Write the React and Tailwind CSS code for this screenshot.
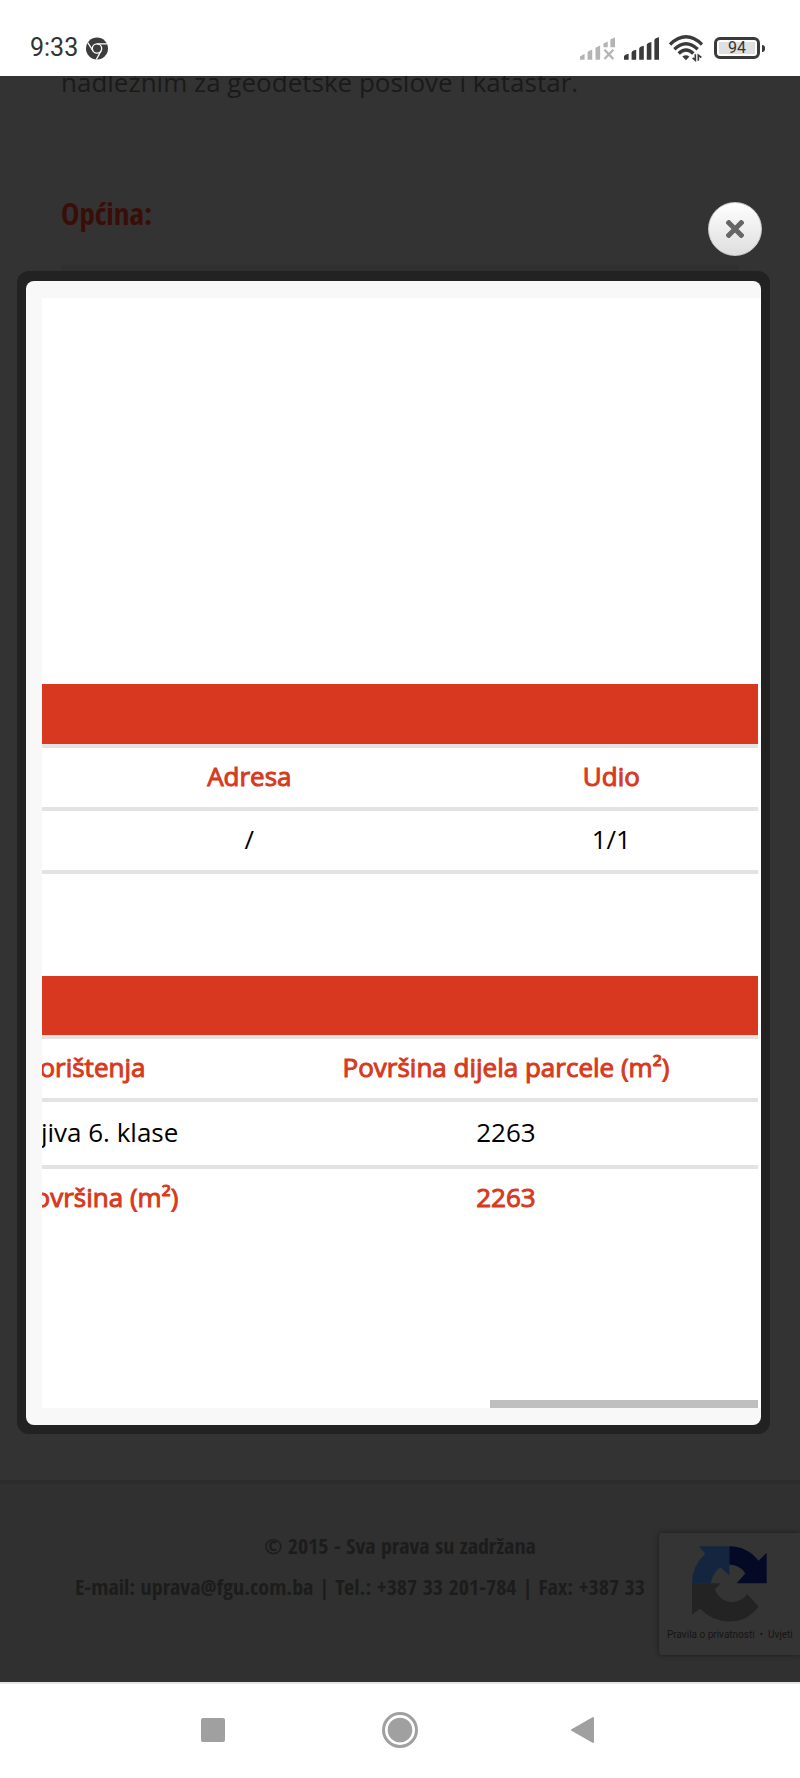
import React from 'react';

const th = 'h-[63px] pb-1 border-b-4 border-[#e3e3e3] text-center font-normal [-webkit-text-stroke:1px_#d63a20]';
const td = 'pb-1 border-b-4 border-[#e3e3e3] text-center text-black';
const total = 'h-[59px] pb-1 text-center font-normal [-webkit-text-stroke:1px_#d63a20]';

function ChromeIcon() {
  return (
    <svg viewBox="0 0 66 68" className="w-[22px] h-[23px]" fill="none" stroke="#fff" strokeWidth="4">
      <circle cx="33" cy="34" r="33" fill="#3c3c3c" stroke="none" />
      <circle cx="33" cy="34" r="14" />
      <path d="M33 20H64M21 41L5 16M45 41L31 67" />
    </svg>
  );
}

function NoSignalIcon() {
  return (
    <svg viewBox="0 0 106 68" className="w-[35px] h-[23px]" fill="#b4b4b4">
      <path d="M0 58L14 50V68H0ZM23 44L37 37V68H23ZM47 32L61 25V68H47ZM71 19L84 13V30H71ZM92 7L106 0V30H92Z" />
      <path d="M74 38L101 66M101 38L74 66" stroke="#b4b4b4" strokeWidth="7" />
    </svg>
  );
}

function SignalIcon() {
  return (
    <svg viewBox="0 0 106 68" className="w-[35px] h-[23px]" fill="#3a3a3a">
      <path d="M0 58Q2 52 14 50V68H0ZM23 46Q25 40 37 38V68H23ZM46 34Q48 28 60 26V68H46ZM69 22Q71 16 83 14V68H69ZM92 8Q94 2 106 0V68H92Z" />
    </svg>
  );
}

function WifiIcon() {
  return (
    <svg viewBox="0 0 102 80" className="w-[34px] h-[27px]" fill="none" stroke="#3a3a3a" strokeWidth="10">
      <path d="M3 28Q51 -18 99 28M16 42Q51 9 86 42M29 55Q51 34 73 55" />
      <path d="M40 64Q51 56 61 64L51 75Z" fill="#3a3a3a" stroke="none" />
      <path d="M79 57V75L71 68M88 77V60L97 67" strokeWidth="5" />
    </svg>
  );
}

function RecaptchaLogo() {
  return (
    <svg viewBox="216 140 225 227" className="w-[75px] h-[76px]">
      <path d="M216 251Q217 198 256 163L237 140H328V228L301 203Q276 222 273 251Z" fill="#14253f" />
      <path d="M328 140Q382 140 416 184L440 160V251H350L376 222Q360 196 328 195Z" fill="#040a26" />
      <path d="M216 251H302L284 270Q302 308 335 308Q364 306 382 284L416 321Q382 366 328 366Q276 365 240 328L216 346Z" fill="#232323" />
    </svg>
  );
}

function StatusBar() {
  return (
    <header className="h-[76px] bg-white flex items-center justify-between pl-[30px] pr-[35px] pt-5 font-[Roboto,sans-serif] text-[#333]">
      <div className="flex items-center gap-2">
        <span className="text-[25px] leading-7">9:33</span>
        <ChromeIcon />
      </div>
      <div className="flex items-center">
        <NoSignalIcon />
        <span className="w-[9px]" />
        <SignalIcon />
        <span className="w-[10px]" />
        <WifiIcon />
        <span className="w-[11px]" />
        <div className="w-[46px] h-[22px] border-[3px] border-[#3a3a3a] rounded-md p-[2px]">
          <div className="h-full bg-[#e0e0e0] flex items-center justify-center text-base leading-3">94</div>
        </div>
        <span className="w-[3px] h-[7px] ml-[2px] rounded-r-sm bg-[#3a3a3a]" />
      </div>
    </header>
  );
}

function OwnersTable() {
  return (
    <table className="w-[128%] shrink-0 table-fixed border-separate border-spacing-0">
      <colgroup>
        <col className="w-[21%]" />
        <col className="w-[47%]" />
        <col className="w-[32%]" />
      </colgroup>
      <thead>
        <tr><td colSpan={3} className="h-16 bg-[#d93820] border-b-4 border-[#e3e3e3]" /></tr>
        <tr className="text-[#d63a20]">
          <th className={th} />
          <th className={th}>Adresa</th>
          <th className={th}>Udio</th>
        </tr>
      </thead>
      <tbody>
        <tr className="h-[63px]">
          <td className={td} />
          <td className={td}>/</td>
          <td className={td}>1/1</td>
        </tr>
      </tbody>
    </table>
  );
}

function ParcelTable() {
  return (
    <table className="w-[128%] shrink-0 table-fixed border-separate border-spacing-0 whitespace-nowrap">
      <colgroup>
        <col className="w-[45%]" />
        <col className="w-[55%]" />
      </colgroup>
      <thead>
        <tr><td colSpan={2} className="h-[63px] bg-[#d93820] border-b-4 border-[#e3e3e3]" /></tr>
        <tr className="text-[#d63a20]">
          <th className={th}>Način korištenja</th>
          <th className={th}>Površina dijela parcele (m²)</th>
        </tr>
      </thead>
      <tbody>
        <tr className="h-[67px]">
          <td className={td}>Oranica/Njiva 6. klase</td>
          <td className={td}>2263</td>
        </tr>
        <tr className="text-[#d63a20]">
          <th className={total}>Ukupna površina (m²)</th>
          <th className={total}>2263</th>
        </tr>
      </tbody>
    </table>
  );
}

export default function App() {
  return (
    <div className="min-h-screen bg-white flex flex-col font-['Open_Sans',sans-serif]">
      <StatusBar />

      <main className="relative flex-1 flex flex-col overflow-hidden bg-[#333]">
        {/* Dimmed page */}
        <div className="flex-1 px-[61px]">
          <p className="-mt-3.5 text-[26px] leading-10 text-[#1a1a1a]">nadležnim za geodetske poslove i katastar.</p>
          <h2 className="mt-[91px] text-[31px] leading-10 font-bold text-[#3a0e08] font-['Open_Sans_Condensed','Liberation_Sans_Narrow',sans-serif]">Općina:</h2>
          <div className="mt-8 h-16 bg-[#303030]" />
        </div>
        <footer className="h-[202px] pt-[41px] border-t-4 border-[#2c2c2c] bg-[#303030] text-[22px] leading-[41px] font-bold text-[#1c1c1c] whitespace-nowrap font-['Open_Sans_Condensed','Liberation_Sans_Narrow',sans-serif]">
          <p className="text-center">© 2015 - Sva prava su zadržana</p>
          <p className="pl-[75px]">E-mail: uprava@fgu.com.ba | Tel.: +387 33 201-784 | Fax: +387 33</p>
        </footer>
        <aside className="absolute right-0 bottom-[27px] w-[141px] h-[122px] pt-[13px] rounded-l bg-[#343434] shadow-[0_0_5px_#1c1c1c] font-[Roboto,sans-serif]">
          <div className="flex justify-center"><RecaptchaLogo /></div>
          <p className="mt-[5px] pl-2 flex gap-[5px] text-[10px] leading-4 text-[#141414] whitespace-nowrap">
            <a href="#privatnost">Pravila o privatnosti</a>
            <span>•</span>
            <a href="#uvjeti">Uvjeti</a>
          </p>
        </aside>

        {/* Lightbox */}
        <div className="absolute inset-0 flex flex-col pt-[126px] pb-[248px] pl-[17px] pr-[30px]">
          <button aria-label="Zatvori" className="self-end mr-2 w-[54px] h-[54px] shrink-0 rounded-full bg-linear-to-b from-white to-[#dedede] border border-[#c8c8c8] flex items-center justify-center">
            <svg viewBox="0 0 18 18" className="w-[18px] h-[18px]" stroke="#666" strokeWidth="5">
              <path d="M1 1L17 17M17 1L1 17" />
            </svg>
          </button>
          <div role="dialog" className="mt-[15px] flex-1 flex flex-col pt-2.5 px-[9px] pb-[9px] rounded-xl bg-[#222]">
            <div className="flex-1 flex flex-col pl-4 py-[17px] rounded-lg bg-[#f8f8f8] overflow-hidden">
              <div className="flex-1 flex flex-col bg-white pr-[3px] text-[26px] leading-9">
                <div className="pt-[386px] flex justify-end overflow-hidden"><OwnersTable /></div>
                <div className="mt-[102px] flex justify-end overflow-hidden"><ParcelTable /></div>
                <div className="mt-auto self-end w-3/8 h-2 bg-[#bfbfbf]" />
              </div>
            </div>
          </div>
        </div>
      </main>

      <nav className="h-24 pb-0.5 border-t-2 border-[#e5e5e5] bg-white grid grid-cols-3 px-[120px]">
        <button aria-label="Recent" className="flex items-center justify-center">
          <span className="w-6 h-6 rounded-xs bg-[#a0a0a0]" />
        </button>
        <button aria-label="Home" className="flex items-center justify-center">
          <svg viewBox="0 0 36 36" className="w-9 h-9">
            <circle cx="18" cy="18" r="16.5" fill="none" stroke="#a0a0a0" strokeWidth="3" />
            <circle cx="18" cy="18" r="12.3" fill="#a0a0a0" />
          </svg>
        </button>
        <button aria-label="Back" className="flex items-center justify-center">
          <svg viewBox="0 0 32 28" className="w-8 h-7">
            <path d="M1 14L22 2V26Z" fill="#a0a0a0" stroke="#a0a0a0" strokeWidth="2" strokeLinejoin="round" />
          </svg>
        </button>
      </nav>
    </div>
  );
}
